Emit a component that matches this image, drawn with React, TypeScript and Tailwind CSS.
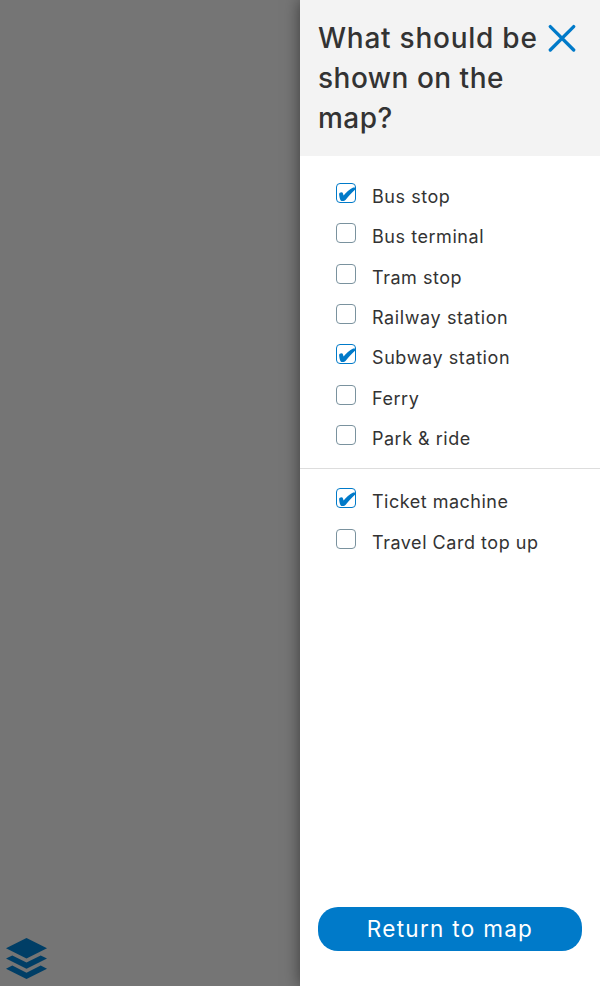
type Option = { label: string; checked?: boolean; tracking: string };

const stops: Option[] = [
  { label: "Bus stop", checked: true, tracking: "tracking-[0.55px]" },
  { label: "Bus terminal", tracking: "tracking-[0.55px]" },
  { label: "Tram stop", tracking: "tracking-[0.53px]" },
  { label: "Railway station", tracking: "tracking-[0.6px]" },
  { label: "Subway station", checked: true, tracking: "tracking-[0.59px]" },
  { label: "Ferry", tracking: "tracking-[0.55px]" },
  { label: "Park & ride", tracking: "tracking-[0.5px]" },
];

const services: Option[] = [
  { label: "Ticket machine", checked: true, tracking: "tracking-[0.5px]" },
  { label: "Travel Card top up", tracking: "tracking-[0.53px]" },
];

function OptionRow({ option }: { option: Option }) {
  return (
    <label className="flex h-[40.33px] items-start gap-4 pl-9">
      <span
        className={`block size-5 shrink-0 rounded-[4px] border bg-white ${
          option.checked ? "border-[#007ac9]" : "border-[#7a929e]"
        }`}
      >
        {option.checked && (
          <svg viewBox="0 0 18 18" className="block size-[18px]" fill="#007ac9">
            <path d="M2.1 10.1C2 8.6 4.8 7.5 5.7 8.8L6.6 11.6C9 8.5 12.6 5.1 16.2 3.4L18.4 3.4V5.3C14.5 8.6 11.5 12 8.7 15.8C7.7 17.2 4.3 17.5 3.5 16.2C2.7 14.6 2.2 12.1 2.1 10.1Z" />
          </svg>
        )}
      </span>
      <span className={`whitespace-nowrap pt-[3px] text-[18px] leading-[22px] text-[#333] ${option.tracking}`}>
        {option.label}
      </span>
    </label>
  );
}

export default function App() {
  return (
    <div className="flex h-[986px] w-[600px] overflow-hidden bg-[#757575] font-['Inter','Liberation_Sans',sans-serif]">
      <div className="flex w-[300px] items-end pb-[7px] pl-[6px]">
        <svg width="41" height="41" viewBox="0 0 41 41" fill="#003e66">
          <path d="M20.5 0L41 10.2L20.5 20.5L0 10.2Z" />
          <path d="M0 20.5L6.3 17.4L20.5 24.5L34.7 17.4L41 20.5L20.5 30.8Z" />
          <path d="M0 30.7L6.3 27.6L20.5 34.7L34.7 27.6L41 30.7L20.5 41Z" />
        </svg>
      </div>
      <aside className="flex w-[300px] flex-col bg-white shadow-[0_0_15px_rgba(0,0,0,0.5)]">
        <header className="flex h-[156px] items-start justify-between bg-[#f3f3f3] pl-[18px] pr-[24px] pt-[18px]">
          <h1 className="whitespace-nowrap text-[28px] font-medium leading-10 tracking-[0.5px] text-[#333]">
            <span className="tracking-[0.75px]">What should be</span>
            <br />
            shown on the
            <br />
            map?
          </h1>
          <svg className="-ml-2 mt-[6px] shrink-0" width="28" height="28" viewBox="0 0 28 28" fill="none" stroke="#007ac9" strokeWidth="3.3" strokeLinecap="round">
            <path d="M2.3 2.6L25.7 26M25.7 2.6L2.3 26" />
          </svg>
        </header>
        <section className="h-[313px] border-b border-[#ddd] pt-[27px]">
          {stops.map((option) => (
            <OptionRow key={option.label} option={option} />
          ))}
        </section>
        <section className="pt-[19.33px]">
          {services.map((option) => (
            <OptionRow key={option.label} option={option} />
          ))}
        </section>
        <div className="mt-auto px-[18px] pb-[35px]">
          <button className="block h-11 w-full rounded-[20px] bg-[#007ac9] text-[22.5px] leading-[44px] tracking-[1.3px] text-white">
            Return to map
          </button>
        </div>
      </aside>
    </div>
  );
}
